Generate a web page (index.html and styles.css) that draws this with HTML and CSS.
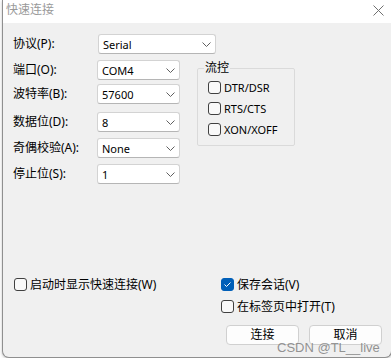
FILE: index.html
```html
<!DOCTYPE html>
<html lang="zh-CN">
<head>
    <meta charset="UTF-8">
    <title>快速连接</title>
    <link rel="stylesheet" href="styles.css">
</head>
<body>
    <div class="window">
        <div class="titlebar">
            <span class="title">快速连接</span>
            <svg class="close" width="11" height="11" viewBox="0 0 11 11"><path d="M0.5 0.5L10.5 10.5M10.5 0.5L0.5 10.5" stroke="#707070" stroke-width="1" fill="none"/></svg>
        </div>
        <div class="content">
            <div class="row">
                <span class="label">协议(P):</span>
                <div class="select wide"><span class="en">Serial</span><svg width="9" height="5" viewBox="0 0 9 5"><path d="M0.5 0.5L4.5 4.5L8.5 0.5" stroke="#606060" fill="none"/></svg></div>
            </div>
            <div class="middle">
                <div class="fields">
                    <div class="row">
                        <span class="label">端口(O):</span>
                        <div class="select"><span class="en">COM4</span><svg width="9" height="5" viewBox="0 0 9 5"><path d="M0.5 0.5L4.5 4.5L8.5 0.5" stroke="#606060" fill="none"/></svg></div>
                    </div>
                    <div class="row r3">
                        <span class="label">波特率(B):</span>
                        <div class="select"><span class="en">57600</span><svg width="9" height="5" viewBox="0 0 9 5"><path d="M0.5 0.5L4.5 4.5L8.5 0.5" stroke="#606060" fill="none"/></svg></div>
                    </div>
                    <div class="row r4">
                        <span class="label">数据位(D):</span>
                        <div class="select"><span class="en">8</span><svg width="9" height="5" viewBox="0 0 9 5"><path d="M0.5 0.5L4.5 4.5L8.5 0.5" stroke="#606060" fill="none"/></svg></div>
                    </div>
                    <div class="row r5">
                        <span class="label">奇偶校验(A):</span>
                        <div class="select"><span class="en">None</span><svg width="9" height="5" viewBox="0 0 9 5"><path d="M0.5 0.5L4.5 4.5L8.5 0.5" stroke="#606060" fill="none"/></svg></div>
                    </div>
                    <div class="row r5">
                        <span class="label">停止位(S):</span>
                        <div class="select"><span class="en">1</span><svg width="9" height="5" viewBox="0 0 9 5"><path d="M0.5 0.5L4.5 4.5L8.5 0.5" stroke="#606060" fill="none"/></svg></div>
                    </div>
                </div>
                <fieldset class="flow">
                    <legend>流控</legend>
                    <label class="check"><span class="box"></span><span class="en">DTR/DSR</span></label>
                    <label class="check"><span class="box"></span><span class="en">RTS/CTS</span></label>
                    <label class="check"><span class="box"></span><span class="en">XON/XOFF</span></label>
                </fieldset>
            </div>
            <div class="options">
                <label class="check"><span class="box"></span>启动时显示快速连接(W)</label>
                <div class="option-col">
                    <label class="check"><span class="box checked"><svg width="11" height="11" viewBox="0 0 11 11"><path d="M2.5 5.5L4.5 7.5L8.5 3.5" stroke="#fff" stroke-width="1" fill="none"/></svg></span>保存会话(V)</label>
                    <label class="check"><span class="box"></span>在标签页中打开(T)</label>
                </div>
            </div>
            <div class="actions">
                <button>连接</button>
                <button>取消</button>
            </div>
        </div>
        <span class="watermark">CSDN @TL__live</span>
    </div>
</body>
</html>
```

FILE: styles.css
```css
body {
    margin: 0;
    background: #fff;
    font-family: "Noto Sans", "Noto Sans CJK SC", sans-serif;
    font-size: 12px;
    color: #000;
}
.window {
    position: relative;
    margin-left: 2px;
    width: 388px;
    height: 357px;
    background: #f0f0f0;
    border: 1px solid #8f8f8f;
    border-top: none;
    border-radius: 0 0 7px 7px;
    box-shadow: 0 1px 3px rgba(0, 0, 0, 0.25);
    overflow: hidden;
}
.titlebar {
    height: 23px;
    background: #fff;
    display: flex;
    justify-content: space-between;
    align-items: flex-start;
    padding: 2px 7px 0 3px;
    box-sizing: border-box;
}
.title {
    color: #999;
    line-height: 16px;
}
.close {
    margin-top: 3px;
}
.content {
    padding: 11px 9px 0 10px;
}
.en {
    font-size: 11px;
}
.row {
    display: flex;
    align-items: center;
    height: 20px;
}
.label {
    width: 84px;
    line-height: 14px;
}
.select {
    box-sizing: border-box;
    width: 83px;
    height: 20px;
    background: #fff;
    border: 1px solid #d3d3d3;
    border-bottom-color: #b5b5b5;
    border-radius: 3px;
    display: flex;
    align-items: center;
    justify-content: space-between;
    padding: 0 4px 0 4px;
}
.select.wide {
    width: 118px;
    margin-left: 1px;
}
.middle {
    display: flex;
    align-items: flex-start;
    margin-top: 6px;
}
.fields {
    display: flex;
    flex-direction: column;
    width: 167px;
}
.r3 { margin-top: 4px; }
.r4 { margin-top: 8px; }
.r5 { margin-top: 6px; }
.flow {
    box-sizing: border-box;
    width: 98px;
    min-width: 0;
    margin: 1px 0 0 17px;
    padding: 0 0 9px 6px;
    border: 1px solid #dadada;
    border-radius: 2px;
}
.flow legend {
    padding: 0 1px;
    line-height: 14px;
}
.flow .check {
    margin: 8px 0 0 4px;
}
.flow .check:first-of-type {
    margin-top: 6px;
}
.check {
    display: flex;
    align-items: center;
    height: 13px;
    line-height: 13px;
}
.box {
    box-sizing: border-box;
    width: 13px;
    height: 13px;
    border: 1px solid #404040;
    border-radius: 3px;
    background: #f9f9f9;
    margin-right: 3px;
    flex-shrink: 0;
}
.box.checked {
    background: #005fb8;
    border-color: #005fb8;
}
.box svg {
    display: block;
}
.options {
    display: grid;
    grid-template-columns: 207px auto;
    margin-top: 94px;
    padding-left: 1px;
}
.option-col {
    display: flex;
    flex-direction: column;
    gap: 9px;
}
.actions {
    display: flex;
    justify-content: flex-end;
    gap: 10px;
    margin-top: 12px;
}
button {
    width: 73px;
    height: 20px;
    padding: 0;
    background: #fdfdfd;
    border: 1px solid #d0d0d0;
    border-radius: 4px;
    font-family: "Noto Sans", "Noto Sans CJK SC", sans-serif;
    font-size: 12px;
    line-height: 14px;
    color: #000;
}
.watermark {
    position: absolute;
    left: 274px;
    top: 340px;
    font-family: "Liberation Sans", sans-serif;
    font-size: 13px;
    line-height: 15px;
    color: rgba(120, 120, 120, 0.8);
}
```
